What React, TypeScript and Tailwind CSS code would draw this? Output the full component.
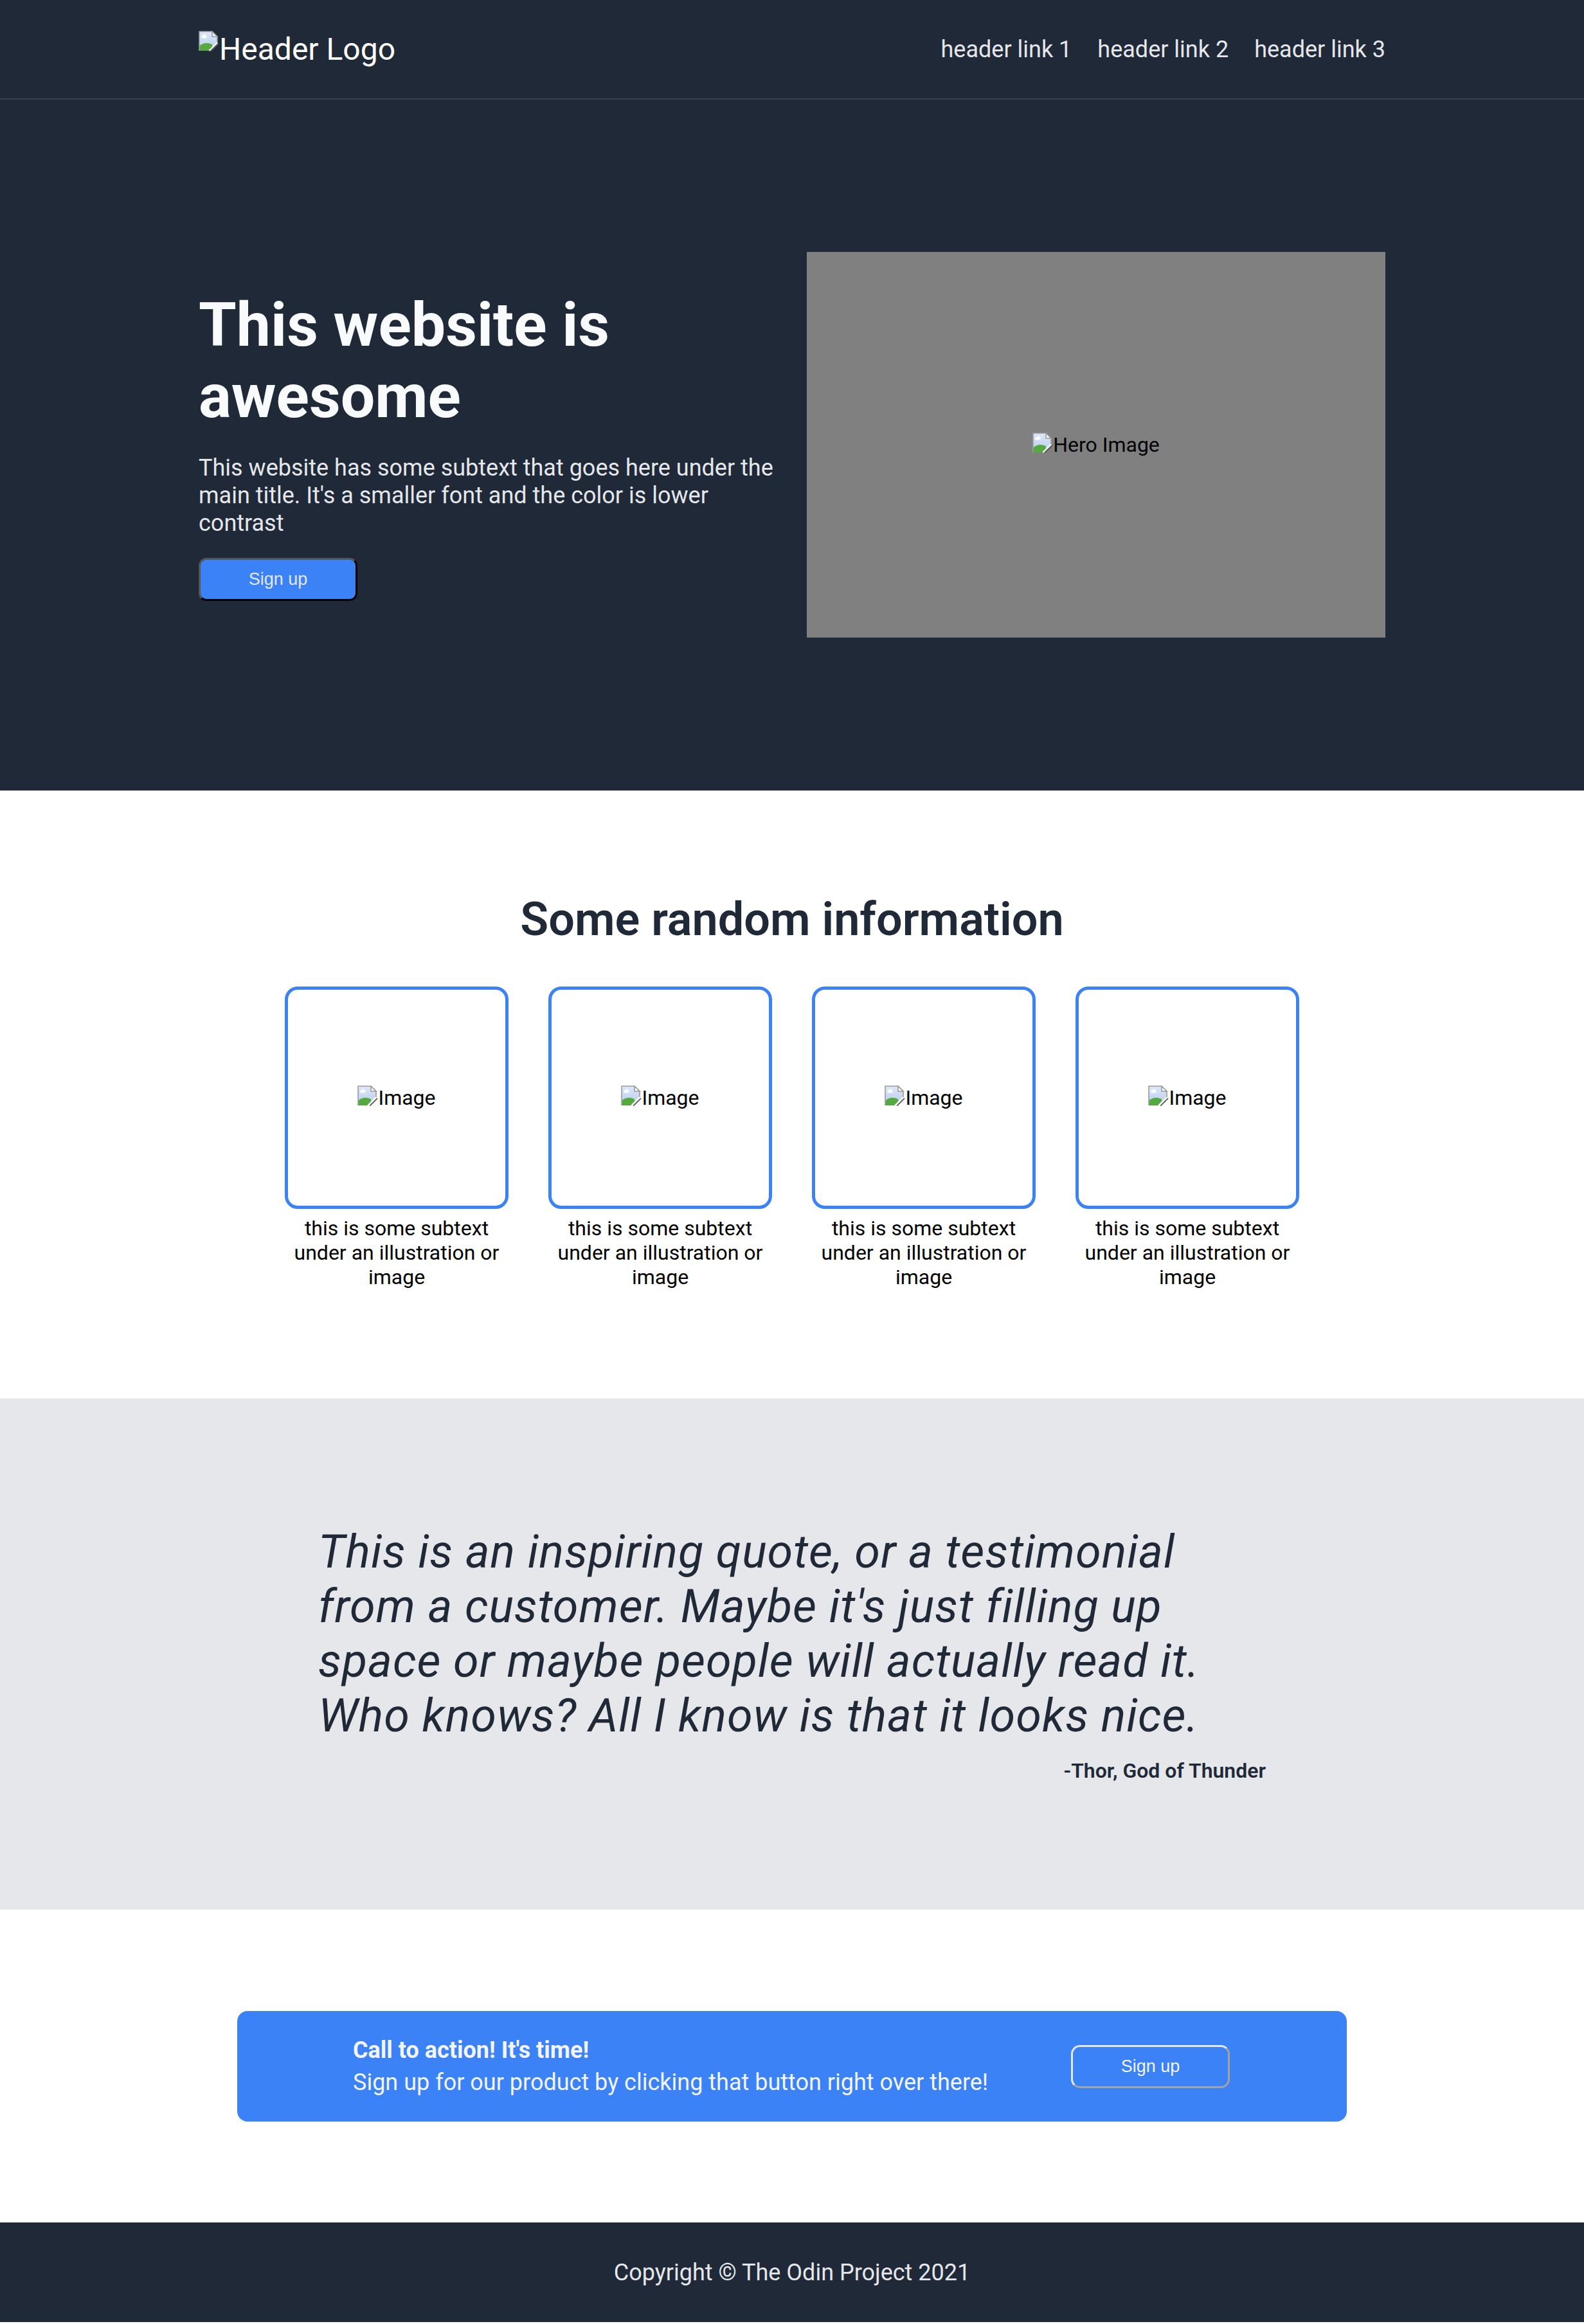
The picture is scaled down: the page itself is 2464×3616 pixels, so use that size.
import React from "react";

function BrokenImage() {
  return (
    <svg viewBox="0 0 16 16" className="h-[32px] w-[32px] shrink-0">
      <defs>
        <linearGradient id="sky" x1="0" y1="0" x2="0" y2="1">
          <stop offset="0" stopColor="#dce8f8" />
          <stop offset="1" stopColor="#b7cbec" />
        </linearGradient>
        <clipPath id="page">
          <path d="M0.5 0.5H10.5L14.5 4.5V9.2L8.2 15.5H0.5Z" />
        </clipPath>
      </defs>
      <path d="M0.5 0.5H10.5L14.5 4.5V9.2L8.2 15.5H0.5Z" fill="url(#sky)" />
      <g clipPath="url(#page)">
        <ellipse cx="4.2" cy="4.6" rx="2.1" ry="1.2" fill="#fff" />
        <circle cx="4.6" cy="3.9" r="1.1" fill="#fff" />
        <path d="M0 16V12.6C2.5 9.4 6.5 8.6 10.5 10.6L11 16Z" fill="#56a840" />
      </g>
      <path
        d="M0.5 15.5V0.5H10.5L14.5 4.5V9.2"
        fill="none"
        stroke="#9b9b9b"
        strokeWidth="0.8"
      />
      <path d="M10.5 0.5V4.5H14.5Z" fill="#fff" stroke="#9b9b9b" strokeWidth="0.8" />
      <path d="M8.2 15.5L14.5 9.2" stroke="#fff" strokeWidth="1.2" />
      <path d="M9.6 15.8L15.5 9.9" stroke="#555" strokeWidth="0.9" />
    </svg>
  );
}

function AltText({ label, className }: { label: string; className: string }) {
  return (
    <span className={`inline-flex items-start ${className}`}>
      <BrokenImage />
      <span>{label}</span>
    </span>
  );
}

const cards = [1, 2, 3, 4];

export default function App() {
  return (
    <div className="font-[Roboto,sans-serif] leading-[normal]">
      <header className="h-[155px] border-b-2 border-[#374151] bg-[#1f2937]">
        <div className="mx-auto flex h-full w-[1846px] items-center justify-between">
          <AltText label="Header Logo" className="text-[48px] text-white" />
          <nav className="flex gap-[40px] text-[36px] text-[#e5e7eb]">
            <a href="#">header link 1</a>
            <a href="#">header link 2</a>
            <a href="#">header link 3</a>
          </nav>
        </div>
      </header>

      <section className="bg-[#1f2937] pt-[237px] pb-[238px]">
        <div className="mx-auto flex w-[1846px] items-center gap-[46px]">
          <div className="w-[900px]">
            <h1 className="text-[95px] font-bold text-[#f9fafb]">
              This website is awesome
            </h1>
            <p className="mt-[35px] text-[36px] leading-[43px] text-[#e5e7eb]">
              This website has some subtext that goes here under the main title.
              It's a smaller font and the color is lower contrast
            </p>
            <button className="mt-[32px] h-[67px] w-[247px] rounded-[12px] border-[3px] border-[#555] border-r-black border-b-black bg-[#3b82f6] font-['Liberation_Sans',Arial,sans-serif] text-[27px] text-[#e5e7eb]">
              Sign up
            </button>
          </div>
          <div className="flex h-[600px] w-[900px] items-center justify-center bg-[#808080]">
            <AltText label="Hero Image" className="text-[32px] text-black" />
          </div>
        </div>
      </section>

      <section className="bg-white pt-[158px] pb-[170px]">
        <h2 className="text-center text-[72px] font-semibold text-[#1f2937]">
          Some random information
        </h2>
        <div className="mt-[62px] flex justify-center gap-[62px]">
          {cards.map((n) => (
            <div key={n} className="flex w-[348px] flex-col items-center">
              <div className="flex h-[346px] w-[348px] items-center justify-center rounded-[20px] border-[5px] border-[#3b82f6]">
                <AltText label="Image" className="text-[32px] text-black" />
              </div>
              <p className="mt-[11px] text-center text-[32px] text-black">
                this is some subtext under an illustration or image
              </p>
            </div>
          ))}
        </div>
      </section>

      <section className="bg-[#e5e7eb] pt-[196px] pb-[197px]">
        <div className="mx-auto w-[1474px] text-[#1f2937]">
          <p className="w-[1410px] text-[72px] font-normal italic tracking-[0.9px]">
            This is an inspiring quote, or a testimonial from a customer. Maybe
            it's just filling up space or maybe people will actually read it.
            Who knows? All I know is that it looks nice.
          </p>
          <p className="mt-[24px] text-right text-[32px] font-semibold">
            -Thor, God of Thunder
          </p>
        </div>
      </section>

      <section className="bg-white pt-[158px] pb-[157px]">
        <div className="mx-auto flex w-[1726px] items-center justify-between rounded-[16px] bg-[#3b82f6] py-[40px] pr-[182px] pl-[180px] text-[#f3f4f6]">
          <div>
            <p className="text-[36px] font-bold">Call to action! It's time!</p>
            <p className="mt-[8px] text-[36px]">
              Sign up for our product by clicking that button right over there!
            </p>
          </div>
          <button className="h-[67px] w-[247px] rounded-[14px] border-[3px] border-[#e5e7eb] border-r-[#a3a3a3] border-b-[#a3a3a3] bg-transparent font-['Liberation_Sans',Arial,sans-serif] text-[27px] text-[#f3f4f6]">
            Sign up
          </button>
        </div>
      </section>

      <footer className="flex h-[155px] items-center justify-center bg-[#1f2937] text-[36px] text-[#e5e7eb]">
        Copyright © The Odin Project 2021
      </footer>
    </div>
  );
}
